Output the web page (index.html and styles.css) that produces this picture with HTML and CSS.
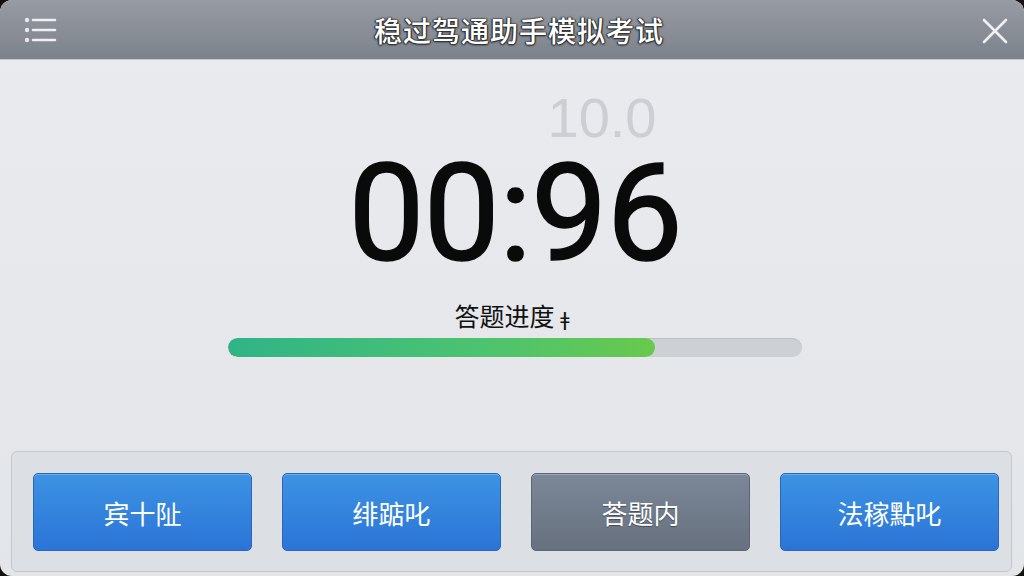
FILE: index.html
```html
<!DOCTYPE html>
<html lang="zh-CN">
<head>
    <meta charset="UTF-8">
    <meta name="viewport" content="width=device-width, initial-scale=1.0">
    <title>稳过驾通助手模拟考试</title>
    <link rel="stylesheet" href="styles.css">
</head>
<body>
    <div class="app">
        <div class="topbar">
            <span class="menu-btn">
                <svg width="34" height="26" viewBox="0 0 34 26">
                    <circle cx="3" cy="3" r="2.2" fill="#e6e8ec"/>
                    <circle cx="3" cy="13" r="2.2" fill="#e6e8ec"/>
                    <circle cx="3" cy="23" r="2.2" fill="#e6e8ec"/>
                    <path d="M9 3H31M9 13H31M9 23H31" stroke="#eef0f3" stroke-width="2.6" stroke-linecap="round"/>
                </svg>
            </span>
            <h1 class="title">稳过驾通助手模拟考试</h1>
            <span class="close-btn">
                <svg width="26" height="26" viewBox="0 0 26 26">
                    <path d="M2 2L24 24M24 2L2 24" stroke="#eef0f3" stroke-width="2.6" stroke-linecap="round"/>
                </svg>
            </span>
        </div>

        <div class="main">
            <div class="score">10.0</div>
            <div class="timer">00:96</div>
            <div class="progress-label">答题进度 <span class="mark">ǂ</span></div>
            <div class="progress">
                <div class="progress-fill" style="width: 74.4%"></div>
            </div>
        </div>

        <div class="actions">
            <button class="btn">宾十阯</button>
            <button class="btn">绯踮叱</button>
            <button class="btn btn-grey">荅题内</button>
            <button class="btn">法稼點叱</button>
        </div>
    </div>
</body>
</html>
```

FILE: styles.css
```css
html, body {
    margin: 0;
    padding: 0;
    background: #111;
}
body {
    font-family: "Liberation Sans", "Noto Sans CJK SC", sans-serif;
}
.app {
    width: 1024px;
    height: 576px;
    display: flex;
    flex-direction: column;
    background: linear-gradient(#e9ebee, #e3e5e8);
    border-radius: 12px;
    overflow: hidden;
}
.topbar {
    height: 60px;
    flex: none;
    display: flex;
    align-items: center;
    justify-content: space-between;
    padding: 0 12px 0 24px;
    background: linear-gradient(#979ba3, #7c828b);
    border-bottom: 1px solid #c7cace;
    box-sizing: border-box;
}
.menu-btn, .close-btn {
    display: flex;
    width: 34px;
    justify-content: center;
}
.close-btn { margin-top: 2px; }
.title {
    margin: 0;
    font-family: "Noto Sans CJK SC", sans-serif;
    font-size: 28px;
    font-weight: 500;
    color: #fff;
    letter-spacing: 1px;
    text-shadow: 0 0 2px #222, 0 1px 2px #222, 1px 0 1px #333, -1px 0 1px #333;
    padding-left: 2px;
}
.main {
    display: flex;
    flex-direction: column;
    align-items: center;
}
.score {
    margin-top: 34px;
    padding-left: 180px;
    font-size: 56px;
    line-height: 48px;
    color: #ccced3;
}
.timer {
    margin-top: 20px;
    font-family: Roboto, "Liberation Sans", sans-serif;
    font-size: 136px;
    line-height: 104px;
    letter-spacing: -1px;
    color: #0a0a0a;
    padding-left: 6px;
    -webkit-text-stroke: 1.5px #0a0a0a;
}
.progress-label {
    margin-top: 34px;
    font-family: "Noto Sans CJK SC", sans-serif;
    font-size: 25px;
    line-height: 30px;
    color: #111;
}
.mark {
    font-family: "DejaVu Sans", sans-serif;
    font-size: 20px;
}
.progress {
    margin-top: 4px;
    margin-left: 6px;
    width: 574px;
    height: 19px;
    border-radius: 10px;
    background: #cdd0d5;
    box-shadow: inset 0 1px 1px rgba(0,0,0,0.08);
    overflow: hidden;
}
.progress-fill {
    height: 100%;
    border-radius: 10px;
    background: linear-gradient(90deg, #2fb487, #4cc36f 60%, #68c94c);
}
.actions {
    margin: auto 12px 4px 11px;
    padding: 21px 12px 20px 21px;
    display: grid;
    grid-template-columns: repeat(4, 1fr);
    gap: 30px;
    background: #dcdfe3;
    border: 1px solid #c3c6cb;
    border-radius: 6px;
}
.btn {
    height: 78px;
    border: 1px solid #2a67b8;
    border-radius: 5px;
    background: linear-gradient(#3d93e3, #2b74d7);
    color: #fff;
    font-family: "Noto Sans CJK SC", sans-serif;
    font-size: 26px;
    box-shadow: inset 0 1px 0 rgba(255,255,255,0.25);
    cursor: pointer;
}
.btn-grey {
    border-color: #5c6572;
    background: linear-gradient(#7b8798, #67717f);
    text-shadow: 0 1px 1px rgba(0,0,0,0.4);
}
```
